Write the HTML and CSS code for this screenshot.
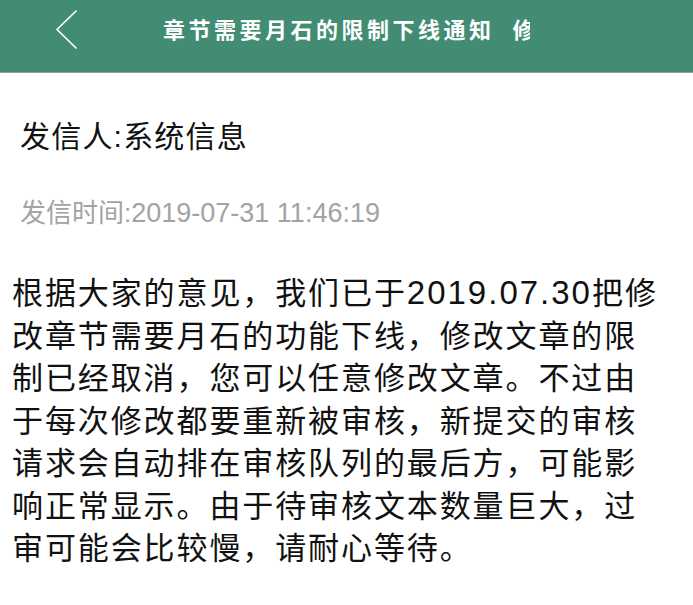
FILE: index.html
```html
<!DOCTYPE html>
<html lang="zh-CN">
<head>
<meta charset="utf-8">
<title>章节需要月石的限制下线通知</title>
<link rel="stylesheet" href="styles.css">
</head>
<body>
<header class="navbar">
  <a class="back" aria-label="返回">
    <svg width="30" height="44" viewBox="0 0 30 44"><path d="M26 3 L7 21.5 L26 40" fill="none" stroke="#ffffff" stroke-width="1.7" stroke-linecap="round" stroke-linejoin="round"/></svg>
  </a>
  <div class="title"><span>章节需要月石的限制下线通知</span><span class="title-next">修改章节的限制</span></div>
</header>
<main class="message">
  <p class="sender">发信人:系统信息</p>
  <p class="time">发信时间:<span class="time-num">2019-07-31 11:46:19</span></p>
  <p class="content">根据大家的意见，我们已于<span class="num">2019.07.30</span>把修<br>改章节需要月石的功能下线，修改文章的限<br>制已经取消，您可以任意修改文章。不过由<br>于每次修改都要重新被审核，新提交的审核<br>请求会自动排在审核队列的最后方，可能影<br>响正常显示。由于待审核文本数量巨大，过<br>审可能会比较慢，请耐心等待。</p>
</main>
</body>
</html>
```
FILE: styles.css
```css
html, body {
  margin: 0;
  padding: 0;
  background: #ffffff;
}
body {
  width: 693px;
  height: 605px;
  overflow: hidden;
  font-family: "Liberation Sans", "Noto Sans CJK SC", sans-serif;
  color: #111111;
}
.navbar {
  height: 72px;
  background: #428c74;
  border-bottom: 1px solid #9a9a9a;
  display: flex;
  align-items: flex-start;
}
.back {
  display: block;
  margin-left: 50px;
  margin-top: 8px;
  width: 30px;
  height: 44px;
}
.back svg {
  display: block;
}
.title {
  margin-left: 83px;
  width: 367px;
  overflow: hidden;
  white-space: nowrap;
  height: 58px;
  line-height: 57px;
  font-family: "Noto Sans CJK SC", sans-serif;
  font-size: 22px;
  font-weight: 700;
  letter-spacing: 3.5px;
  color: #ffffff;
}
.title-next {
  margin-left: 18px;
}
.message {
  display: flex;
  flex-direction: column;
}
.sender {
  margin: 46px 0 0 0;
  padding-left: 20px;
  font-size: 30px;
  line-height: 36px;
  letter-spacing: 1.2px;
  color: #111111;
}
.time {
  margin: 43px 0 0 0;
  padding-left: 20px;
  font-size: 26px;
  line-height: 30px;
  color: #a3a3a3;
}
.time-num {
  font-size: 27px;
}
.content {
  margin: 44px 0 0 0;
  padding-left: 12px;
  font-size: 31px;
  line-height: 42.5px;
  letter-spacing: 1.9px;
  white-space: nowrap;
  color: #111111;
}
.num {
  font-size: 33px;
  letter-spacing: 2px;
}
```
